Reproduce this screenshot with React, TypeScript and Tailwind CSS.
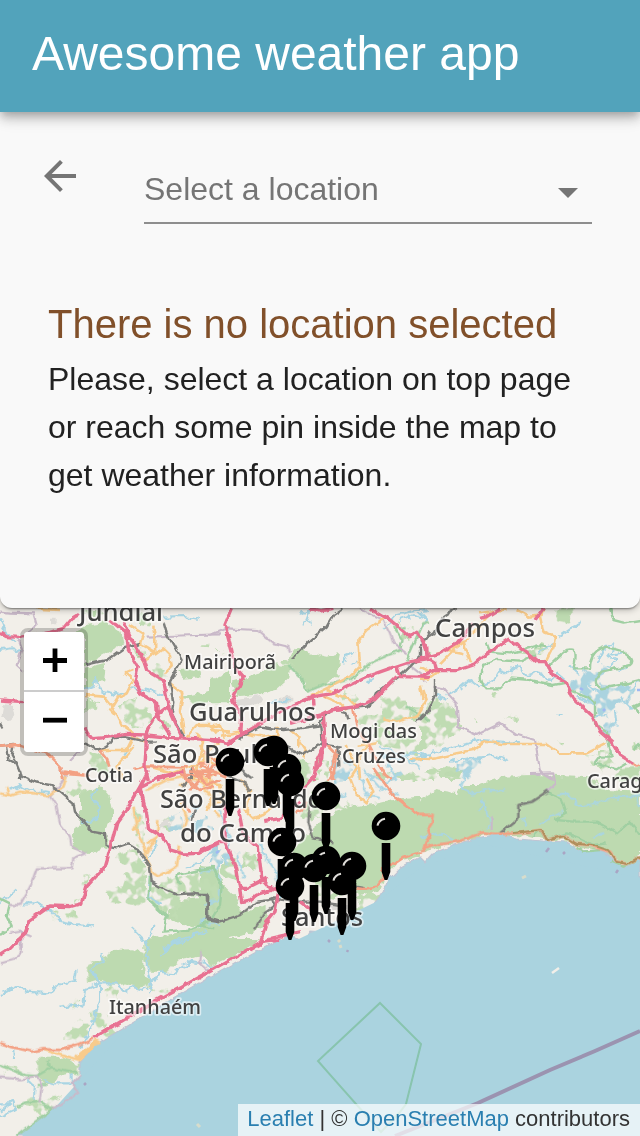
import React from "react";

type Kind =
  | "wood" | "scrub" | "urban" | "water" | "river" | "border" | "reserve"
  | "rail" | "secondary" | "trunk" | "motorway";

type Tile = { x: number; y: number; shapes: Partial<Record<Kind, string>> };

const tiles: Tile[] = [
  {
    x: 0, y: 600,
    shapes: {
      wood: "M225 100L260 75L320 65L365 95L370 130L320 160L255 195L255 110ZM255 200L315 190L310 240L255 270ZM535 210L600 208L605 232L545 236ZM545 290L600 278L660 268L660 300L590 312ZM250 30l40 0 20 12-50 5z",
      scrub: "M360 315L400 295L450 320L455 370L400 385L365 350ZM450 195L500 205L510 230L470 242ZM400 145L430 150L440 170L410 175ZM255 290l40 20-10 20-30-5zM420 40l30 10-5 30-25-5zM610 130l20 0-4 12-16-2zM260 450l40 10 40 40-10 30-60-20zM480 360l30 10 0 20-30 0z",
      urban: "M10 315L38 318L44 345L25 362L5 345ZM150 50l20 0 0 20-20 0z",
      river: "M0 55Q20 110 45 120M0 150L40 145L65 155M490 50L560 48L600 58M255 270L280 260L290 230L300 270L360 285L400 265L440 270L490 290M370 470L395 430",
      border: "M0 35L30 38L100 40L110 75L80 100M440 110L500 108L590 105L660 103M210 480L240 450L255 440M50 110L65 150L50 195L72 215",
      rail: "M490 65L500 100L520 135L545 180L510 245L520 310L515 340L530 370L552 410M255 430L290 450L320 440L340 415L370 410L440 425L470 425M0 440L40 435L35 465L50 490L60 515L60 540M0 370L8 385M18 440L25 480L45 490M572 540L580 500M255 195L320 180L370 145L420 132",
      secondary: "M390 75L430 100L420 130L470 160L490 145L510 165L515 200L495 220M110 26L180 30M255 285L310 290L350 340L370 380L400 400M375 220L400 240L380 280L355 290L330 330L345 345M375 220L400 210M510 250L550 280L540 330L552 400M460 80L466 120L465 160L425 185M300 450L380 450L400 410L440 430M400 440L350 500L370 540M560 410L590 375L630 375L650 400M570 500L620 480L660 500M580 540L600 470L660 480M590 400L610 420L600 470M450 500L520 520L570 500",
      trunk: "M0 440L50 435L140 460L180 500L190 540M300 450L320 475L328 500M190 515L260 525M400 510L440 500L560 502M580 500L600 540M570 515L630 515M590 490L625 490L628 540",
      motorway: "M0 100L20 110L60 112L150 97L190 85L215 55L240 40M330 60L380 100L385 150L415 200L405 240L420 280L470 310L472 345L510 405M370 65L390 110L430 180L440 210L490 240L505 320L545 410M0 300L70 305M252 382Q262 408 282 416L320 412L380 403L440 405L510 412L660 420M510 315L470 345L440 395L435 500L445 540M470 540L550 515",
    },
  },
  {
    x: 210, y: 600,
    shapes: {
      wood: "M0 240L60 210L60 310L0 310ZM62 245L140 225L195 190L240 200L235 235L195 270L140 285L80 288ZM230 190L260 140L300 160L350 170L390 160L382 225L330 262L290 270L270 230Z",
      scrub: "M400 270L440 280L440 312L410 322ZM450 340L520 345L510 290L570 280L585 318L650 320L660 362L590 350L540 380L480 370L440 360ZM490 520L570 515L660 530L660 540L490 540ZM20 150l30 0-10 15zM205 180l35 0 20 15-40 5zM260 470l40 20-10 50-40-20zM570 70l40 20-10 30-20-10z",
      urban: "M80 300L150 288L160 305L90 325ZM210 290l40 0 0 20-40 0z",
      water: "M388 485L415 478L428 510L410 540L385 540Z",
      river: "M280 80L300 30L270 45M285 60L305 65M520 90L560 45L600 35L660 30M570 60L610 45L650 60M400 190L410 165L435 155M440 180l-15 12M500 460L560 480L600 460L660 465M470 250L490 235M650 470L600 480M180 310L240 300",
      border: "M0 105L50 85L140 90L190 130L235 140L240 155M450 25L520 60L540 100L550 130L590 160M590 190L630 220L645 245",
      reserve: "M235 195L270 230L290 275L340 255L420 240L480 190L570 150L578 120L550 80L590 85M590 180L640 70L660 65M590 320L660 360",
      rail: "M400 25L370 45L350 80L300 120L245 180M660 95L630 140L630 170L580 220L500 280L490 305L470 320L410 325L360 330L330 360L335 430L395 440M90 420L100 405L150 380L220 390L270 385L335 375M170 440L230 442L280 465L335 430M385 440L388 500M640 340L620 365M390 335L410 340L415 358",
      secondary: "M530 50L470 90L445 120L450 200L420 230L360 260L300 290M0 380L30 375L45 420M0 390L60 395M200 380L205 440M240 390L265 410L265 440M340 290L390 310L410 330M640 270L650 300L620 350L560 365L520 355M480 430L445 470L450 540M600 475L660 480M105 400L160 410L200 405M350 270L420 300L440 320M30 410L100 395M500 430L440 440",
      trunk: "M430 325L440 380L480 440L520 520L545 540M380 445L365 500L370 540M0 510L50 530",
      motorway: "M65 25L45 75L65 150L75 200L100 230L68 300L95 350L92 410M0 420L50 430L100 400L150 370L240 320L310 290L370 280L430 250L470 230L540 205L600 185L660 175M480 25L540 60L600 110L620 97L640 130L655 175M560 200L570 230L660 232M240 370L330 345L360 330L440 320L490 300L560 230M340 340L345 430L320 480L312 540M300 25L330 33L370 25M50 435L100 400M310 290L312 320",
    },
  },
  {
    x: 420, y: 600,
    shapes: {
      wood: "M410 25L460 25L445 70L410 60ZM280 540L300 525L400 530L400 540ZM580 540L600 505L660 500L660 540Z",
      scrub: "M0 350L50 290L100 320L125 370L100 410L60 435L0 450ZM20 510L70 498L110 508L140 540L0 540ZM500 470L560 450L590 490L560 510L520 500ZM300 160l50-25 40 10-30 20zM220 280l12 4-4 10-12-2zM260 345l35 4-10 15-15-5zM170 360l10 5-8 10zM410 425l20 0 0 12zM640 430l20 0 0 25-15-5zM0 140L30 160L10 180Z",
      water: "M440 245L480 225L530 190L560 210L530 245L600 262L650 262L635 290L590 320L560 345L575 380L560 420L545 350L525 325L490 290L455 270ZM110 492L150 480L190 480L175 500L150 510L155 530L110 515Z",
      river: "M415 110L450 85L485 70M0 40L20 60L0 90M80 285L115 270L150 240L180 262L220 245L240 210L270 220L290 195L320 225L350 215L390 240L410 220L440 245M530 190L550 150L580 130L575 165L610 155M560 200L590 180L560 165M600 290L640 330M620 200L590 215M0 470L100 440L190 420L300 430M90 485L160 475L220 465L265 480M410 345L428 345M350 160L400 130M50 285L80 300M560 345L520 350M600 260L640 270L660 240M585 330L590 380M450 200L480 225M470 290L520 310M500 250L540 280",
      border: "M40 260L70 265L110 310L115 380L170 405L240 370L290 405L345 420L360 515L400 540",
      reserve: "M200 265Q170 240 190 195L230 180L300 185L345 165M200 265L240 265L270 235L330 240L400 255L440 248M385 200L440 150Q480 140 460 205L510 205Q510 150 560 140L610 155Q650 180 630 195L545 215Q510 250 545 265L600 255L660 240M450 270L500 290L525 310L525 370L560 395L575 470L540 470L525 490L590 508L620 490M570 25L580 60L610 68L660 60M660 310L640 320L660 340M200 130L210 155L270 160L360 135L380 140M640 450L660 430",
      rail: "M0 125L40 100L70 50L110 25M45 240L45 285L20 340L0 360",
      secondary: "M0 180L80 150L130 125L150 190M60 190L100 150L140 120L220 30M80 150L130 160M360 50L370 95L405 110L400 140L380 180M290 30L330 50L365 45L370 25M0 480L50 475L110 460L160 450L190 425L250 432L380 432L420 460L500 460L560 430M0 240L30 235L60 210M0 260L10 300M0 200L40 220M180 40L260 28",
      trunk: "M635 490L660 494",
      motorway: "M0 110L20 140L22 175L45 190L50 215M0 230L40 212L110 212L160 195L200 160L265 118L310 150L350 185L380 185L395 225L440 250L460 295L520 350L540 395L575 425L600 465L640 490M0 175L60 160L110 130L160 70M180 55L200 50L240 25M345 60L370 25",
    },
  },
  {
    x: 0, y: 770,
    shapes: {
      wood: "M240 70L300 45L330 80L340 130L315 180L330 230L270 252L220 240L215 215L240 150ZM530 390L600 385L620 410L620 470L540 465L500 440ZM430 510L500 495L560 480L620 470L660 460L660 540L430 540Z",
      scrub: "M350 250L400 235L430 270L440 340L445 390L400 405L330 390L325 360L370 345L380 300ZM455 350L530 320L600 305L660 290L660 460L620 470L600 380L540 375L530 440L500 440L480 430L455 400ZM180 50L240 40L260 60L220 80ZM210 400L240 385L230 410ZM200 430l20-10 10 20-20 5zM250 325l20-5-5 20-15-2zM400 110l30 40 0 90-20 0zM480 160l20-20 20 20-10 30zM150 420l20 10-5 15z",
      urban: "M485 150L515 150L510 175L480 175Z",
      water: "M500 140L545 128L550 175L510 185ZM560 140L590 160L620 130L632 180L590 190ZM640 240L660 222L660 290L630 280Z",
      river: "M30 60L60 45L90 60L150 70M290 50L275 90L300 110L290 150L240 160M70 400L110 400L155 425L180 455L230 465L285 470M0 400L48 360M395 475L430 510L440 540M460 465L458 490L435 520M470 210L450 260L430 270M450 320L445 380L485 405M560 290L600 280L640 230M430 510L450 540M490 540L520 515L620 485M570 140L600 110L570 105M620 440L600 470",
      border: "M180 0L200 20L150 80L170 110L180 160L210 200L215 230L255 250L220 265L215 295L110 295L90 350L60 405L30 405M30 490L60 485L95 500M65 490L60 540",
      reserve: "M0 385L30 400L20 440L35 470L0 495M450 320L445 390L500 440L490 485L560 480L600 467L640 475M540 340L530 315L600 300L640 290L660 340",
      rail: "M60 0L65 20L110 38L150 45L185 70L220 100L225 125L250 155L275 185L315 192L317 225L350 232L385 220L410 235L450 290L455 335L480 350L530 373L580 370L625 380L620 450L660 457M575 0L570 25L545 50M585 120L575 150",
      secondary: "M0 70L30 75L60 65L150 75L190 50L200 20M30 75L20 50M400 110L410 180L440 250L470 200L475 150M430 250L460 310L475 320L530 290L540 230M440 60L500 30L560 20M540 50L600 10L640 60M560 30L620 30L660 0M600 0L615 60L660 100M470 200L440 220M540 100L560 140L550 180M640 120L660 140M400 180L420 140",
      trunk: "M180 10L270 18M550 0L560 30L600 60L640 50M590 0L620 45L660 30M540 15L650 15M600 30L570 60M550 90L570 130",
      motorway: "M445 0L420 50L380 120L350 160L330 240L315 290L260 350L245 400L210 410L150 408L90 450L75 490L25 540M420 50L440 130L445 175L490 200L510 240L550 252L600 250L660 218M420 50L480 20L520 10M410 60L430 90L430 110",
    },
  },
  {
    x: 200, y: 725,
    shapes: {
      wood: "M340 310L400 265L450 245L540 235L600 220L660 215L660 395L600 405L550 460L535 500L490 510L440 480L380 470L350 430L330 400L300 420L280 380L300 350ZM0 425L40 430L70 480L110 520L120 560L200 540L200 590L160 620L70 650L20 675L0 675Z",
      scrub: "M300 120L370 100L360 160L310 190ZM370 100L390 110L380 180L340 200L300 260L320 300L370 270L380 200ZM340 440L440 480L480 500L420 520L340 500ZM60 380L110 400L120 470L70 450ZM480 510L540 500L550 530L500 580L470 560ZM130 380L170 390L170 440L130 430ZM510 0L600 20L660 60L660 100L600 80L540 60ZM410 230L450 230L420 270L390 280Z",
      urban: "M480 430L540 440L530 460L480 450ZM560 350L600 330L605 350L580 380ZM380 540L440 540L450 560L400 560Z",
      water: "M400 105L425 100L440 140L420 190L400 170ZM60 390L80 370L90 400L70 420Z",
      river: "M450 100L470 130L500 210L540 220M490 130L540 190L600 210M180 360L200 400L230 440L240 520M60 260L90 340L80 420M0 440L40 430L60 460L60 520L10 540M340 210L400 230L440 200M540 60L620 100L660 130M110 380L130 460M500 150L560 170L610 140M0 590L60 600M560 110L590 170",
      reserve: "M0 430L40 430L65 480L60 540L30 590L0 600",
      rail: "M0 510L20 510L25 580L60 590L120 570L170 530L215 525L225 540L195 560L165 610M200 530L225 520L270 530L360 530L420 540M330 230L325 290L340 340L400 352M80 150L130 170L150 200M115 130L155 160M440 480L500 490",
      secondary: "M440 60L470 130L450 160L470 210L500 235L520 200L500 160M130 250L160 280L190 270L240 230M0 100L60 50M20 130L40 200L20 260M120 160L150 200L140 260M0 170L60 180L70 230L30 240M280 240L260 280M0 60L20 100L0 130M300 50L320 80L310 100",
      trunk: "M380 60L410 90L405 140L385 170M520 130L580 210L630 250L660 270M660 382L610 398L580 418L550 420L550 460L530 485L490 492L470 490M290 260L310 250L320 230M0 120L40 140M10 80L50 110L20 160",
      motorway: "M370 30L365 100L340 160L310 190M75 240L75 350L95 400L110 430L125 530L150 525L170 510L230 490M115 250L130 330L175 370L185 460L220 500M0 375L60 350L80 350M115 490L140 490L200 460M235 505L225 560L200 590L180 655M150 675L210 640L300 620M190 290L240 280L300 230M200 485L220 485M300 530L340 560",
    },
  },
  {
    x: 420, y: 770,
    shapes: {
      wood: "M0 90L50 60L110 70L140 45L180 45L250 20L340 15L510 22L560 60L660 65L660 262L615 288L580 265L550 238L480 235L440 212L370 210L330 200L190 195L130 212L0 248ZM50 0L130 0L120 25L60 15Z",
      river: "M150 0L120 45L150 70L210 60L255 60M190 90L210 160L205 178M410 75L440 70L480 110L530 100L590 80L660 78M355 170L390 145L430 125M0 200L60 190L100 210M520 205L550 188M650 80L660 110M300 140L320 170M180 120L190 90",
      border: "M330 12L400 10L405 40L380 65M215 140L215 180",
      reserve: "M380 65L425 85L440 130L405 150L460 155L530 155L590 190L630 155L660 195M340 200L360 180L380 210L440 190L480 205L520 225L560 220M470 230L490 245L540 240M575 275L610 290L650 270",
      rail: "M240 190L295 145L295 105L335 95L385 62",
      trunk: "M0 242L50 224L110 215L150 202L190 187L225 192L290 190L365 180L380 210L430 198L470 222L510 225L545 238L570 245L590 275L620 282L660 262M0 135L38 135L35 160L22 180L30 205L10 235",
    },
  },
  {
    x: 0, y: 940,
    shapes: {
      wood: "M260 75L320 50L340 30L395 28L430 40L430 100L462 130L420 145L370 130L330 135L300 120L265 130ZM430 50L440 0L780 0L700 50L640 75L600 50L540 60L500 95L450 95ZM115 350L180 350L235 372L232 400L190 408L140 432L112 412Z",
      scrub: "M320 140L360 150L355 180L320 170ZM195 290L240 240L265 260L240 310ZM270 215L290 205L320 230L315 268L280 262ZM115 490L170 468L182 485L135 500ZM190 200L240 178L242 195L200 210ZM450 150L510 150L480 175ZM0 375L50 380L60 405L20 390ZM80 480L120 480L155 507L120 530ZM300 290l40-20 5 10-35 20z",
      river: "M0 165L50 140L80 155L150 160L180 130L225 120L230 90M175 200L230 195L250 200L255 150L300 130L270 90L305 65L305 45M300 130L345 130L380 155L400 140L430 150L460 130L480 95L520 100L570 65L600 70L635 75M430 0L445 40L440 75L455 130L450 160M300 180L290 210L260 290L240 320M480 45L520 10L570 0M0 515L40 480L45 510L0 530M80 420L105 440L100 480M130 420L160 430L215 430L215 400M40 330L42 360M300 135L300 185M0 490L30 490",
      border: "M0 70L40 60L65 40L65 0M0 412L60 418L110 408L125 435L118 490M155 507L235 460L215 430L240 405M605 30L600 70L625 90",
      reserve: "M50 588L155 507L120 485L80 490L50 500M0 375L40 390L75 405L110 408L150 385L145 360M150 385L235 400M110 435L140 435",
      secondary: "M130 330L180 345L240 360L300 305M235 350L290 300M240 360L225 345M238 356L296 302",
      trunk: "M0 310L40 322L95 335L130 328L180 330L240 312L280 295",
      motorway: "M0 45L30 25L55 0M280 295L330 265L390 228L480 175L620 98L780 8L840 0",
    },
  },
];

const layers: { kind: Kind; fill?: string; stroke?: string; width?: number; rough?: string }[] = [
  { kind: "urban", fill: "#dddbd7", rough: "url(#rough)" },
  { kind: "wood", fill: "#bddab0", rough: "url(#rough)" },
  { kind: "scrub", fill: "#c0dcb3", rough: "url(#speckle)" },
  { kind: "water", fill: "#aad3df", rough: "url(#speckle)" },
  { kind: "river", stroke: "#a9d5e3", width: 2.1, rough: "url(#rough)" },
  { kind: "reserve", stroke: "#a0cfa2", width: 2.4, rough: "url(#gentle)" },
  { kind: "border", stroke: "#c9b9c9", width: 2.1, rough: "url(#gentle)" },
  { kind: "secondary", stroke: "#f8cb8b", width: 2.6, rough: "url(#gentle)" },
  { kind: "rail", stroke: "#7d7e7b", width: 2.4, rough: "url(#gentle)" },
  { kind: "trunk", stroke: "#f3a184", width: 2.7, rough: "url(#gentle)" },
  { kind: "motorway", stroke: "#e87292", width: 3.4, rough: "url(#gentle)" },
];

const SEA =
  "M17 1136L52 1109L60 1105L78 1093L72 1083L80 1075L80 1062L100 1042L120 1030L157 1008L205 980L260 950L278 941L290 935L297 938L303 944L310 932L327 933L337 942L347 936L353 925L363 925L373 905L383 892L390 878L400 868L420 857L425 862L433 853L447 848L463 842L483 837L500 834L517 839L543 841L567 842L580 851L603 850L617 863L625 868L640 858V1136Z";

const labels: [string, number, number, number, number][] = [
  ["Jundiaí", 79, 620.5, 25, 84],
  ["Campos", 435, 636.5, 25, 100],
  ["Mairiporã", 184, 668.5, 19.5, 92],
  ["Guarulhos", 189, 720.5, 25, 127],
  ["São Paulo", 153, 762.5, 25, 120],
  ["Mogi das", 330, 737.5, 19.5, 87],
  ["Cruzes", 342, 762.5, 19.5, 64],
  ["Cotia", 85, 782, 19.5, 48],
  ["São Bernardo", 160, 808, 25, 163],
  ["do Campo", 180, 841.5, 25, 126],
  ["Santos", 281, 925.5, 25, 82],
  ["Itanhaém", 109, 1013.5, 19.5, 92],
  ["Caraguatatuba", 587, 788, 19.5, 142],
];

const pins: [number, number][] = [
  [274, 750], [268, 752], [230, 762], [287, 768], [290, 782], [326, 796],
  [386, 826], [282, 842], [326, 860], [352, 866], [294, 867], [314, 868], [342, 881], [290, 886],
];

function Pin({ x, y }: { x: number; y: number }) {
  return (
    <g transform={`translate(${x} ${y})`}>
      <circle r="14.3" />
      <path d="M-4.3 17H4.3V46L1.4 54H-1.4L-4.3 46Z" />
      <path d="M-8.5 -.3Q-7.5 -6 -1 -7.3" fill="none" stroke="#dedcd8" strokeWidth="2" />
    </g>
  );
}

function MapCanvas() {
  return (
    <svg className="block h-full w-full" viewBox="0 596 640 540">
      <defs>
        <filter id="gentle" filterUnits="userSpaceOnUse" x="0" y="590" width="640" height="546">
          <feTurbulence type="fractalNoise" baseFrequency=".12" numOctaves="2" seed="4" />
          <feDisplacementMap in="SourceGraphic" scale="5" xChannelSelector="R" yChannelSelector="G" />
        </filter>
        <filter id="rough" filterUnits="userSpaceOnUse" x="0" y="590" width="640" height="546">
          <feTurbulence type="fractalNoise" baseFrequency=".14" numOctaves="2" seed="9" />
          <feDisplacementMap in="SourceGraphic" scale="8" xChannelSelector="R" yChannelSelector="G" />
        </filter>
        <filter id="speckle" filterUnits="userSpaceOnUse" x="0" y="590" width="640" height="546">
          <feTurbulence type="fractalNoise" baseFrequency=".11" numOctaves="2" seed="7" result="n" />
          <feDisplacementMap in="SourceGraphic" in2="n" scale="12" xChannelSelector="R" yChannelSelector="G" result="d" />
          <feColorMatrix in="n" type="matrix" values="0 0 0 0 0 0 0 0 0 0 0 0 0 0 0 0 0 0 7 -2.7" result="m" />
          <feComposite in="d" in2="m" operator="in" />
        </filter>
        <filter id="soft" filterUnits="userSpaceOnUse" x="0" y="590" width="640" height="546" colorInterpolationFilters="sRGB">
          <feGaussianBlur stdDeviation=".65" />
        </filter>
      </defs>
      <g filter="url(#soft)">
        <rect y="590" width="640" height="546" fill="#f2efe9" />
        {layers.slice(0, 4).map((l) => (
          <g key={l.kind} fill={l.fill} filter={l.rough}>
            {tiles.map((t, i) => (
              <path key={i} d={t.shapes[l.kind] ?? "M0 0"} transform={`translate(${t.x} ${t.y}) scale(.33333)`} />
            ))}
          </g>
        ))}
        <path d={SEA} fill="#aad3df" stroke="#bfc4d3" strokeWidth="1.2" filter="url(#gentle)" />
        <path d="M22 1136L52 1111L120 1036L260 956L280 948L380 900L420 868L483 844L640 878V1136Z" fill="#aad3df" />
        {layers.slice(4).map((l) => (
          <g key={l.kind} fill="none" stroke={l.stroke} strokeWidth={(l.width ?? 2) * 3} strokeLinejoin="round" filter={l.rough}>
            {tiles.map((t, i) => (
              <path key={i} d={t.shapes[l.kind] ?? "M0 0"} transform={`translate(${t.x} ${t.y}) scale(.33333)`} />
            ))}
          </g>
        ))}
        <path d="M513 833L542 830L547 840L563 836L577 844L592 845L608 850L617 862L627 864L640 857" fill="none" stroke="#9a8a50" strokeOpacity=".75" strokeWidth="2" filter="url(#gentle)" />
        <path d="M380 1003L421 1044L406 1104L400 1112L381 1132L356 1104L318 1061Z" fill="none" stroke="#88c4ae" strokeWidth="2" />
        <path d="M640 1031L595 1051L550 1070L478 1103L395 1136" fill="none" stroke="#9b93b0" strokeWidth="4" />
        <path d="M552 973l7 -5" stroke="#f2efe9" strokeWidth="2.5" />
        <path d="M522 878l4 -2M197 1124l3 3M340 945l1 3M338 940l2 2" stroke="#d8dccb" strokeWidth="3" />
        <path d="M546 852l3 -4M563 854l2 -2M616 873l2 -3M84 1085l2 -2M347 952l1 -2M328 940l2 2" stroke="#a9a5c4" strokeWidth="2.5" />
        <path d="M580 688l3 2M603 711l2 -2M637 690l3 0M216 853l3 -2" stroke="#9fb8f2" strokeWidth="2.5" />
        <g fontFamily='"Noto Sans", sans-serif' strokeLinejoin="round">
          {labels.map(([name, x, y, size, width]) => (
            <text
              key={name} x={x} y={y} fontSize={size} textLength={width} lengthAdjust="spacingAndGlyphs"
              fill="#414141" stroke="#ffffff" strokeOpacity=".6" strokeWidth="3.4" paintOrder="stroke"
              fontWeight="500"
            >
              {name}
            </text>
          ))}
        </g>
      </g>
      {pins.map(([x, y], i) => <Pin key={i} x={x} y={y} />)}
    </svg>
  );
}

function ZoomControl() {
  return (
    <div className="absolute top-8 left-5 flex w-[68px] flex-col rounded-lg border-4 border-black/20 bg-clip-padding">
      <button className="flex h-[60px] items-center justify-center rounded-t border-b-2 border-[#ccc] bg-white" aria-label="Zoom in">
        <svg className="mr-0 mb-0.5 ml-0.5 h-6 w-6" viewBox="0 0 24 24"><path d="M0 12.5H24M12 .5V24" stroke="#000" strokeWidth="4.8" /></svg>
      </button>
      <button className="flex h-[60px] items-center justify-center rounded-b bg-white" aria-label="Zoom out">
        <svg className="ml-0.5 h-6 w-6" viewBox="0 0 24 24"><path d="M0 10.2H24" stroke="#000" strokeWidth="4.8" /></svg>
      </button>
    </div>
  );
}

export default function App() {
  return (
    <div className="flex h-[1136px] w-[640px] flex-col overflow-hidden bg-white font-['Liberation_Sans',Arial,sans-serif]">
      <header className="z-20 flex h-28 shrink-0 items-center bg-[#52a3bb] px-8 pb-1 shadow-[0_4px_8px_-2px_rgba(0,0,0,0.2),0_8px_10px_rgba(0,0,0,0.14),0_2px_20px_rgba(0,0,0,0.12)]">
        <h1 className="text-5xl leading-none text-white">Awesome weather app</h1>
      </header>

      <main className="z-10 flex h-[496px] shrink-0 flex-col rounded-b-xl bg-[#f9f9f9] px-12 shadow-[0_2px_2px_-1px_rgba(0,0,0,0.4),0_2px_6px_rgba(0,0,0,0.25)]">
        <div className="flex h-28 items-stretch">
          <button className="-ml-3 flex h-12 w-12 shrink-0 self-start pt-10" aria-label="Back">
            <svg className="h-12 w-12 shrink-0" viewBox="0 0 24 24">
              <path fill="#757575" d="M20 11H7.83l5.59-5.59L12 4l-8 8 8 8 1.41-1.41L7.83 13H20v-2z" />
            </svg>
          </button>
          <div className="ml-[60px] flex flex-1 items-center justify-between border-b-2 border-[#8e8e8e] pt-11 pr-[14px] text-[#757575]">
            <span className="text-[32px] leading-none">Select a location</span>
            <span className="mt-2 h-0 w-0 border-x-[10px] border-t-[10px] border-x-transparent border-t-[#757575]" />
          </div>
        </div>
        <h2 className="mt-[72px] text-[40px] leading-[56px] text-[#81502a]">There is no location selected</h2>
        <p className="mt-[3px] text-[32px] leading-[48px] text-[#212121]">
          Please, select a location on top page<br />or reach some pin inside the map to<br />get weather information.
        </p>
      </main>

      <section className="relative -mt-3 h-[540px] shrink-0">
        <MapCanvas />
        <ZoomControl />
        <footer className="absolute right-0 bottom-0 flex h-8 w-[402px] items-center justify-end bg-white/70 px-2.5 pb-1 text-[22px] whitespace-pre text-[#333]">
          <span className="text-[#2a7fb0]">Leaflet</span> | © <span className="text-[#2a7fb0]">OpenStreetMap</span> contributors
        </footer>
      </section>
    </div>
  );
}
